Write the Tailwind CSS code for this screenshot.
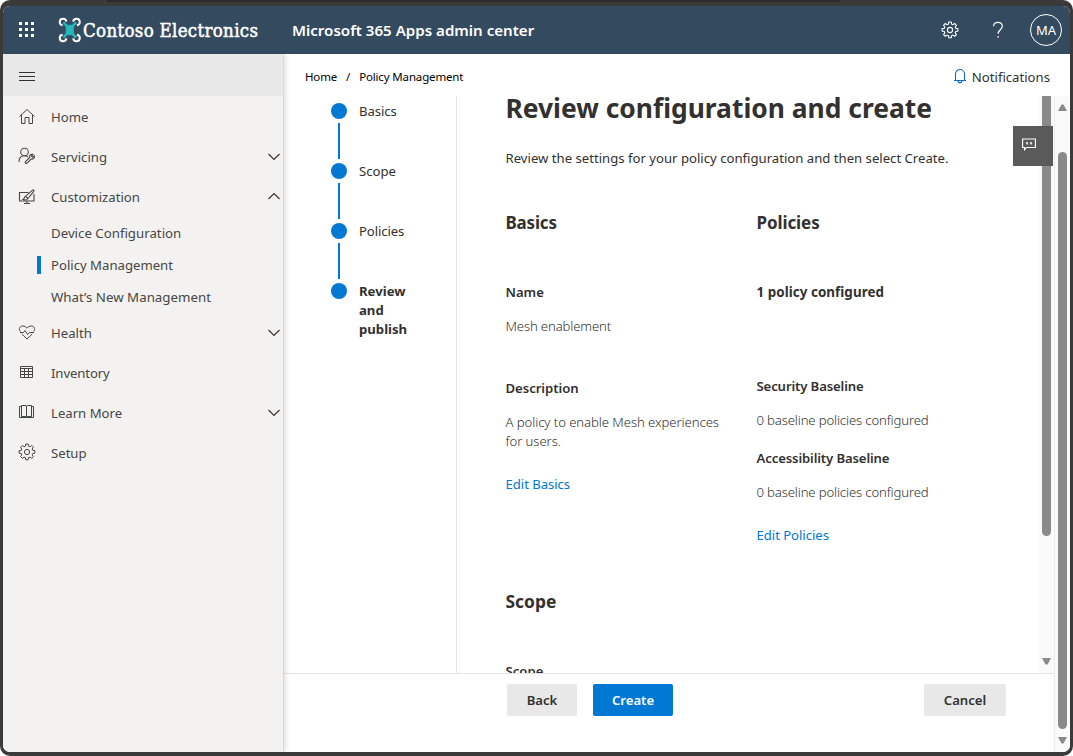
<!DOCTYPE html>
<html lang="en">
<head>
<meta charset="utf-8">
<title>Microsoft 365 Apps admin center</title>
<script src="https://cdn.jsdelivr.net/npm/@tailwindcss/browser@4"></script>
</head>
<body class="w-[1073px] h-[756px] overflow-hidden bg-white font-['Noto_Sans',sans-serif] text-[13.15px] text-[#323130]">
<div class="relative w-[1073px] h-[756px] bg-[#3a3a3a] rounded-[10px] pt-[6px] px-[3px] pb-[4px]">
  <div class="absolute top-0 left-[107px] w-[733px] h-[2px] bg-[#2b2b2b]"></div>
  <div class="flex flex-col h-[746px] rounded-[7px] overflow-hidden bg-white">
    <header class="h-[48px] shrink-0 bg-[#334a5f] flex items-center text-white">
      <svg class="ml-[15px] shrink-0" width="18" height="18" viewBox="0 0 18 18" fill="#fff">
        <path d="M1 1h3v3H1zM7 1h3v3H7zM13 1h3v3h-3zM1 7h3v3H1zM7 7h3v3H7zM13 7h3v3h-3zM1 13h3v3H1zM7 13h3v3H7zM13 13h3v3h-3z"/>
      </svg>
      <svg class="ml-[22px] shrink-0" width="24" height="26" viewBox="0 0 24 26" fill="none">
        <g stroke="#fff" stroke-width="2"><path d="M4.600 8.300A3.300 3.300 0 1 1 8.300 4.600"/><path d="M18.900 8.300A3.300 3.300 0 1 0 15.200 4.600"/><path d="M4.600 17.700A3.300 3.300 0 1 0 8.300 21.400"/><path d="M18.900 17.700A3.300 3.300 0 1 1 15.200 21.400"/></g>
        <path d="M5 6.200L6.200 5L9.300 8.200H14.200L17.300 5L18.500 6.200L15.600 9.600Q14.800 13 15.600 16.400L18.500 19.800L17.300 21L14.200 17.800H9.300L6.200 21L5 19.800L7.900 16.400Q8.700 13 7.900 9.600Z" fill="#27b8bd" stroke="#27b8bd" stroke-width=".8" stroke-linejoin="round"/>
      </svg>
      <span class="w-[176px] ml-px mt-[2px] shrink-0 font-['DejaVu_Serif_Condensed','DejaVu_Serif',serif] text-[18.5px] tracking-[0.32px] whitespace-nowrap" style="-webkit-text-stroke:0.5px #fff">Contoso Electronics</span>
      <span class="ml-[33px] mt-px text-[15.1px] font-semibold whitespace-nowrap">Microsoft 365 Apps admin center</span>
      <div class="ml-auto mr-[8px] flex items-center">
        <svg width="18" height="18" viewBox="0 0 18 18" fill="none" stroke="#fff" stroke-width="1.1"><path d="M7.8 1h2.4l.4 2.2 1.3.5 1.8-1.2 1.7 1.7-1.2 1.8.5 1.3 2.2.4v2.4l-2.2.4-.5 1.3 1.2 1.8-1.7 1.7-1.8-1.2-1.3.5-.4 2.2H7.8l-.4-2.2-1.3-.5-1.8 1.2-1.7-1.7 1.2-1.8-.5-1.3L1.100 10.100V7.700l2.200-.4.5-1.300-1.200-1.800 1.700-1.700 1.800 1.200 1.300-.5z"/><circle cx="9" cy="9" r="2.600"/></svg>
        <svg class="ml-[30px]" width="18" height="18" viewBox="0 0 18 18" fill="none" stroke="#fff" stroke-width="1.200"><path d="M4.600 5.200C4.600 2.600 6.400 1.400 8.900 1.400s4.400 1.500 4.400 3.900c0 3.200-4.200 3.800-4.200 7.500M9.100 15v1.700"/></svg>
        <div class="ml-[23px] size-[32px] rounded-full border border-white flex items-center justify-center pt-[2px] text-[13px]">MA</div>
      </div>
    </header>
    <div class="flex flex-1 min-h-0">
      <nav class="w-[281px] shrink-0 bg-[#f3f2f1] border-r border-[#d8d8d8] shadow-[2px_0_5px_rgba(0,0,0,0.12)] z-10 text-[#484644]">
        <div class="h-[42px] bg-[#e8e8e8] flex items-center pl-[16px] pt-[3px] rounded-tr-[3px] mb-px">
          <svg width="16" height="11" viewBox="0 0 16 11" fill="none" stroke="#323130"><path d="M0 1.500h16M0 5.500h16M0 9.500h16"/></svg>
        </div>
        <div class="h-[40px] flex items-center pl-[15px]">
          <svg width="18" height="18" viewBox="0 0 18 18" fill="none" stroke="#484644"><path d="M1.500 8.500L9 1.500l7.500 7M3.500 7v8.500h3.500V9.500h4v6h3.500V7"/></svg>
          <span class="ml-[15px] pt-[2px]">Home</span>
        </div>
        <div class="h-[40px] flex items-center pl-[15px]">
          <svg class="mb-[2px]" width="18" height="18" viewBox="0 0 18 18" fill="none" stroke="#484644" stroke-width="1.100"><circle cx="6.500" cy="5" r="3.800"/><path d="M1 15c0-3.800 2-6.200 5.500-6.200 1.500 0 2.500.4 3.500 1.200"/><path d="M7.500 14.600l4.200-4.100c-.5-2 1-3.600 3.200-3.100l-1.500 1.600 1.300 1.300 1.600-1.500c.6 2.200-1.100 3.800-3.200 3.200L9 16.100c-1 1-2.500-.5-1.500-1.500z"/></svg>
          <span class="ml-[15px] pt-[2px]">Servicing</span>
          <svg class="ml-auto mr-[2px] mb-px" width="14" height="8" viewBox="0 0 14 8" fill="none" stroke="#323130" stroke-width="1.100"><path d="M1.500 1L7 6.500 12.500 1"/></svg>
        </div>
        <div class="h-[40px] flex items-center pl-[15px]">
          <svg width="18" height="18" viewBox="0 0 18 18" fill="none" stroke="#484644" stroke-width="1.100"><path d="M10.500 4.500H1.500v8.500h14.500V6M9 13v2.500M6 15.500h6"/><path d="M5 11.500c1.500-.5 1-2.500 2.500-3.200l7-6.200c1-.6 1.900.3 1.300 1.200L10 10.500c-1 1.500-3 1.800-5 1zM7.500 8.300L10 10.500"/></svg>
          <span class="ml-[15px] pt-[2px]">Customization</span>
          <svg class="ml-auto mr-[2px] mb-[2px]" width="14" height="8" viewBox="0 0 14 8" fill="none" stroke="#323130" stroke-width="1.100"><path d="M1.500 7L7 1.500 12.500 7"/></svg>
        </div>
        <div class="h-[32px] flex items-center pl-[48px] pt-[2px] text-[13.250px]">Device Configuration</div>
        <div class="h-[32px] flex items-center pl-[34px]"><div class="w-[4px] h-[18px] bg-[#0078d4] mr-[10px] mb-px"></div><span class="pt-[2px]">Policy Management</span></div>
        <div class="h-[32px] flex items-center pl-[48px] pt-[2px] text-[13.300px]">What’s New Management</div>
        <div class="h-[40px] flex items-center pl-[15px]">
          <svg width="18" height="18" viewBox="0 0 18 18" fill="none" stroke="#484644"><path d="M2.300 7.500C.2 4.500 2 2 4.800 2 6.500 2 7.800 2.800 9 4.200 10.200 2.800 11.500 2 13.200 2c2.800 0 4.600 2.500 2.500 5.500M3.800 10L9 15l5.200-5M2 8.500h3.500L7 6.500l2.700 4 1.800-2H16"/></svg>
          <span class="ml-[15px] pt-[2px]">Health</span>
          <svg class="ml-auto mr-[2px] mb-px" width="14" height="8" viewBox="0 0 14 8" fill="none" stroke="#323130" stroke-width="1.100"><path d="M1.500 1L7 6.500 12.500 1"/></svg>
        </div>
        <div class="h-[40px] flex items-center pl-[15px]">
          <svg class="mb-[2px]" width="18" height="18" viewBox="0 0 18 18" fill="none" stroke="#484644"><path d="M2.500 3.500h12v11h-12zM2.500 5.500h12M2.500 8.500h12M2.500 11.500h12M6.500 5.500v9M10.500 5.500v9"/></svg>
          <span class="ml-[15px] pt-[2px] tracking-[-0.1px]">Inventory</span>
        </div>
        <div class="h-[40px] flex items-center pl-[15px]">
          <svg class="mb-[2px]" width="18" height="18" viewBox="0 0 18 18" fill="none" stroke="#3c4a3c"><path d="M3.500 2.500h3.500c1 0 1.500.5 1.500 1 0-.5.5-1 1.500-1h3.500v11H10c-1 0-1.500.5-1.500 1 0-.5-.5-1-1.500-1H3.500zM8.500 3v12M3.500 3.500h-2v11h14v-11h-2"/></svg>
          <span class="ml-[15px] pt-[2px]">Learn More</span>
          <svg class="ml-auto mr-[2px] mb-px" width="14" height="8" viewBox="0 0 14 8" fill="none" stroke="#323130" stroke-width="1.100"><path d="M1.500 1L7 6.500 12.500 1"/></svg>
        </div>
        <div class="h-[40px] flex items-center pl-[15px]">
          <svg class="mb-[2px]" width="18" height="18" viewBox="0 0 18 18" fill="none" stroke="#484644"><path d="M7.800 1h2.400l.4 2.200 1.300.5 1.800-1.200 1.700 1.700-1.200 1.800.5 1.300 2.200.4v2.400l-2.200.4-.5 1.300 1.200 1.800-1.700 1.700-1.800-1.200-1.300.5-.4 2.200H7.800l-.4-2.200-1.300-.5-1.800 1.200-1.700-1.700 1.200-1.800-.5-1.300L1.100 10.100V7.700l2.200-.4.5-1.300-1.200-1.800 1.700-1.700 1.800 1.200 1.300-.5z"/><circle cx="9" cy="9" r="2.600"/></svg>
          <span class="ml-[15px] pt-[2px]">Setup</span>
        </div>
      </nav>
      <main class="flex-1 min-w-0 flex flex-col">
        <div class="h-[42px] shrink-0 flex items-center pt-[3px] pl-[21px] pr-[20px]">
          <div class="flex text-[11.500px] tracking-[-0.15px] text-black whitespace-nowrap"><span>Home</span><span class="w-[22px] text-center">/</span><span>Policy Management</span></div>
          <svg class="ml-auto mb-[2px]" width="14" height="16" viewBox="0 0 14 16" fill="none" stroke="#0f6cbd" stroke-width="1.100"><path d="M1 12.500h12M2.500 12.500V6a4.500 4.500 0 0 1 9 0v6.500M5 12.800a2 2 0 0 0 4 0"/></svg>
          <span class="ml-[5px] pt-[2px]">Notifications</span>
        </div>
        <div class="flex flex-1 min-h-0">
          <div class="relative w-[770px] shrink-0 flex flex-col">
            <div class="flex h-[577px] shrink-0 overflow-hidden">
              <ol class="w-[173px] shrink-0 border-r border-[#e6e5e4] pt-[7px] pl-[47px] leading-[19px]">
                <li class="flex h-[60px]"><div class="w-[16px] flex flex-col items-center"><i class="size-[16px] shrink-0 rounded-full bg-[#0078d4]"></i><i class="mt-[4px] w-[2px] h-[36px] bg-[#0078d4]"></i></div><span class="ml-[12px] -mt-px tracking-[-0.1px]">Basics</span></li>
                <li class="flex h-[60px]"><div class="w-[16px] flex flex-col items-center"><i class="size-[16px] shrink-0 rounded-full bg-[#0078d4]"></i><i class="mt-[4px] w-[2px] h-[36px] bg-[#0078d4]"></i></div><span class="ml-[12px] -mt-px">Scope</span></li>
                <li class="flex h-[60px]"><div class="w-[16px] flex flex-col items-center"><i class="size-[16px] shrink-0 rounded-full bg-[#0078d4]"></i><i class="mt-[4px] w-[2px] h-[36px] bg-[#0078d4]"></i></div><span class="ml-[12px] -mt-px tracking-[-0.1px]">Policies</span></li>
                <li class="flex"><i class="size-[16px] shrink-0 rounded-full bg-[#0078d4]"></i><span class="ml-[12px] -mt-px w-[60px] font-bold">Review and publish</span></li>
              </ol>
              <section class="flex-1 min-w-0 pl-[48.500px] leading-[20px]">
                <h1 class="text-[26.400px] leading-[36px] -mt-[6px] font-bold whitespace-nowrap">Review configuration and create</h1>
                <p class="mt-[22px]">Review the settings for your policy configuration and then select Create.</p>
                <div class="mt-[43px] flex">
                  <div class="w-[251px]">
                    <h2 class="text-[17px] leading-[24px] font-bold tracking-[-0.2px]">Basics</h2>
                    <h3 class="mt-[47px] font-semibold">Name</h3>
                    <p class="mt-[14px] font-light tracking-[-0.15px]">Mesh enablement</p>
                    <h3 class="mt-[42px] font-semibold tracking-[-0.05px]">Description</h3>
                    <p class="mt-[15px] leading-[19px] w-[235px] font-light tracking-[-0.08px]">A policy to enable Mesh experiences<br>for users.</p>
                    <p class="mt-[23px] text-[#0078d4] tracking-[-0.05px]">Edit Basics</p>
                  </div>
                  <div>
                    <h2 class="text-[17px] leading-[24px] font-bold tracking-[-0.1px]">Policies</h2>
                    <h3 class="mt-[47px] font-bold text-[13.400px] tracking-[0.05px]">1 policy configured</h3>
                    <h3 class="mt-[74px] font-semibold tracking-[-0.13px]">Security Baseline</h3>
                    <p class="mt-[14px] font-light tracking-[-0.15px]">0 baseline policies configured</p>
                    <h3 class="mt-[18px] font-semibold tracking-[-0.13px]">Accessibility Baseline</h3>
                    <p class="mt-[14px] font-light tracking-[-0.15px]">0 baseline policies configured</p>
                    <p class="mt-[23px] text-[#0078d4] tracking-[-0.05px]">Edit Policies</p>
                  </div>
                </div>
                <h2 class="mt-[44px] text-[17.400px] leading-[24px] font-bold">Scope</h2>
                <h3 class="mt-[48px] font-semibold">Scope</h3>
              </section>
              <div class="w-[15px] shrink-0 bg-[#fafafa] flex flex-col items-center">
                <div class="w-[9px] h-[440px] bg-[#8a8a8a] rounded-b-full"></div>
                <svg class="mt-[122px]" width="9" height="7" viewBox="0 0 9 7" fill="#8a8a8a"><path d="M0 0h9L5.500 6.500h-2z"/></svg>
              </div>
            </div>
            <footer class="flex-1 border-t border-[#e6e5e4] flex items-start pt-[10px] pl-[223px] pr-[48px] font-semibold">
              <button class="w-[70px] h-[32px] pt-[2px] rounded-[2px] bg-[#e8e8e8]">Back</button>
              <button class="ml-[16px] w-[80px] h-[32px] pt-[2px] rounded-[2px] bg-[#0078d4] text-white">Create</button>
              <button class="ml-auto w-[82px] h-[32px] pt-[2px] rounded-[2px] bg-[#e8e8e8]">Cancel</button>
            </footer>
            <div class="absolute left-[729px] top-[30px] w-[40px] h-[40px] bg-[#5a5a5a] pl-[9px] pt-[12px]">
              <svg width="14" height="13" viewBox="0 0 14 13" fill="none" stroke="#fff" stroke-width="1.100"><path d="M.6 1h12.800v8.500H4.500L2.500 11.800V9.500H.6z"/><path d="M4 4.200h2v1.600H4zM8 4.200h2v1.600H8z" fill="#fff" stroke="none"/><path d="M5.800 5.500L5 6.800M9.800 5.500L9 6.800" stroke-width=".8"/></svg>
            </div>
          </div>
          <div class="flex-1 bg-[#fafafa] border-l border-[#ececec] flex flex-col items-center pt-[8px]">
            <svg width="9" height="7" viewBox="0 0 9 7" fill="#8a8a8a"><path d="M0 7h9L5.500 .5h-2z"/></svg>
            <div class="mt-[41px] w-[9px] h-[577px] bg-[#8a8a8a] rounded-full"></div>
            <svg class="mt-[8px]" width="9" height="7" viewBox="0 0 9 7" fill="#8a8a8a"><path d="M0 0h9L5.500 6.500h-2z"/></svg>
          </div>
        </div>
      </main>
    </div>
  </div>
</div>
</body>
</html>
